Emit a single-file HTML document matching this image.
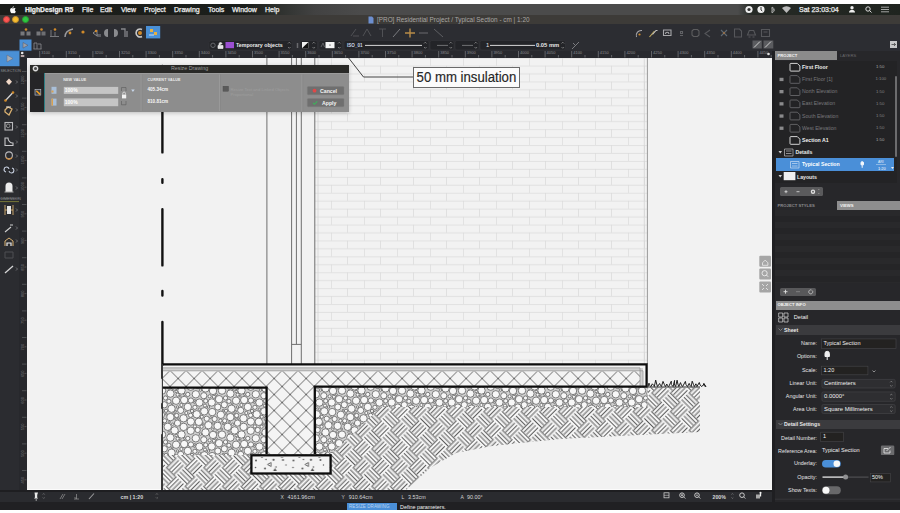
<!DOCTYPE html>
<html><head><meta charset="utf-8">
<style>
*{box-sizing:border-box}
html,body{margin:0;padding:0}
body{width:900px;height:513px;overflow:hidden;background:#fff;position:relative;font-family:"Liberation Sans",sans-serif;color:#ddd}
.a{position:absolute}
.t{position:absolute;white-space:nowrap}
#menubar{left:0;top:4px;width:900px;height:11px;background:linear-gradient(90deg,#1a1d1a 0,#1b1e1b 245px,#2c2f2c 275px,#424242 315px,#4b4b4b 360px,#4b4b4b 738px,#262a26 752px,#1f241f 900px)}
#menubar .t{top:1px;font-size:7px;line-height:9px;color:#f4f4f4;-webkit-text-stroke:.25px #e8e8e8}
#titlebar{left:0;top:15px;width:900px;height:9px;background:#3d3b38}
#toolbar{left:0;top:24px;width:900px;height:27px;background:#2c2d32}
#rtop{left:27px;top:51px;width:745px;height:7px;background:#28292e}
#ltools{left:0;top:51px;width:19px;height:439px;background:#2b2c30}
#rleft{left:19px;top:51px;width:8px;height:439px;background:#27282c}
#canvas{left:27px;top:58px;width:745px;height:432px;background:#f2f2f2;overflow:hidden}
#rpanel{left:772px;top:51px;width:128px;height:459px;background:#27272a}
#status{left:0;top:490px;width:772px;height:20px;background:#2a2b2f}
#bottomwhite{left:0;top:510px;width:900px;height:3px;background:#fff}
</style></head><body>
<!-- MENUBAR -->
<div id="menubar" class="a">
  <svg class="a" style="left:9px;top:1px" width="7" height="9" viewBox="0 0 7 9"><path d="M3.6 2.1c.3-.5.9-.9 1.3-.9 0 .5-.2 1-.5 1.3-.3.3-.7.5-1 .5 0-.3 0-.6.2-.9zM5.3 3.1c.6 0 1 .3 1.3.7-1.1.6-1 2.2.2 2.6-.3.9-.9 1.9-1.6 1.9-.5 0-.6-.3-1.2-.3s-.8.3-1.2.3C2 8.3 1.1 6.6 1.1 5.1c0-1.3.8-2 1.6-2 .5 0 .9.3 1.2.3.3 0 .8-.3 1.4-.3z" fill="#fafafa"/></svg>
  <span class="t" style="left:25px;font-weight:bold;font-size:6.8px">HighDesign R5</span>
  <span class="t" style="left:82px">File</span>
  <span class="t" style="left:100px">Edit</span>
  <span class="t" style="left:121px">View</span>
  <span class="t" style="left:144px">Project</span>
  <span class="t" style="left:174px">Drawing</span>
  <span class="t" style="left:208px">Tools</span>
  <span class="t" style="left:232px">Window</span>
  <span class="t" style="left:265px">Help</span>
  <svg class="a" style="left:741px;top:1px" width="160" height="9" viewBox="0 0 160 9">
    <circle cx="8" cy="4.5" r="3.6" fill="#eee"/><circle cx="8" cy="4.5" r="1.6" fill="#333"/>
    <circle cx="20" cy="4.5" r="3.6" fill="#eee"/><path d="M20 2v3l1.3 1" stroke="#333" stroke-width="1" fill="none"/>
    <path d="M31 2l2.5 2-2.5 2.5M31 2v6l2.5-2.2L31 3.3" stroke="#ccc" stroke-width=".7" fill="none"/>
    <path d="M41 3a7 7 0 0 1 9 0L45.5 8z" fill="#bbb"/>
    <path d="M108 7.5c0-2 1.5-2.5 3-2.5s3 .5 3 2.5zM111 1a1.7 1.7 0 1 1 0 3.4 1.7 1.7 0 0 1 0-3.4" fill="#eee"/>
    <circle cx="127" cy="4" r="2.2" stroke="#ddd" stroke-width="1" fill="none"/><path d="M128.5 5.5l2 2" stroke="#ddd" stroke-width="1"/>
    <path d="M140 2.2h8M140 4.5h8M140 6.8h8" stroke="#ddd" stroke-width=".7"/>
  </svg>
  <span class="t" style="left:799px">Sat 23:03:04</span>
</div>
<!-- TITLEBAR -->
<div id="titlebar" class="a">
  <div class="a" style="left:2.5px;top:1.2px;width:7px;height:7px;border-radius:50%;background:#fc5753;border:.5px solid #c8403c"></div>
  <div class="a" style="left:11.8px;top:1.2px;width:7px;height:7px;border-radius:50%;background:#f6bd30;border:.5px solid #c8942a"></div>
  <div class="a" style="left:21.5px;top:1.2px;width:7px;height:7px;border-radius:50%;background:#30c640;border:.5px solid #24a032"></div>
  <svg class="a" style="left:368px;top:1px" width="6" height="8"><path d="M.5 .5h3.5l1.5 1.5v5.5h-5z" fill="#6d8fd0"/></svg>
  <span class="t" style="left:377px;top:0;font-size:6.4px;line-height:9px;color:#a9a7a5">[PRO] Residential Project / Typical Section - cm | 1:20</span>
</div>
<div id="toolbar" class="a"></div>
<svg class="a" style="left:0;top:0" width="900" height="58" viewBox="0 0 900 58">
<!-- row1 left group -->
<g fill="none" stroke="#8a8b8f" stroke-width="1">
 <rect x="20.5" y="31.5" width="4" height="4" fill="#77787c" stroke="none"/><rect x="26.5" y="31.5" width="4" height="4" fill="#77787c" stroke="none"/>
 <rect x="36.5" y="31.5" width="4" height="4" fill="#77787c" stroke="none"/><rect x="41.5" y="31.5" width="4" height="4" fill="#6d6e72" stroke="none"/>
 <path d="M50 36.5h9M51 30v6M55 32v4" stroke="#77787c"/>
 <path d="M65 37c0-4 3-7 8-8" stroke="#9a9b9f" stroke-width="1.4"/>
 <path d="M93 33l4-3v6zM98 34v3M100 34v3" stroke="#8a8b8f"/>
 <path d="M108 29a4 4 0 0 0 0 8zM114 29a4 4 0 0 1 0 8z" fill="#8a8b8f" stroke="none"/>
 <path d="M121 29h4v8M127 31v6" stroke="#85868a" stroke-width="1.3"/>
 <path d="M142 29.5a4 4 0 1 0 0 7" stroke="#c8c8c8" stroke-width="1.6"/>
</g>
<g fill="#d08a2a">
 <circle cx="26" cy="29.5" r="1.3"/><circle cx="41.5" cy="29.5" r="1.3"/><circle cx="55" cy="29.5" r="1.3"/><circle cx="70" cy="33" r="1.4"/>
 <circle cx="83" cy="32" r="1.6"/><circle cx="96" cy="31" r="1.2"/><circle cx="140" cy="33" r="2"/>
</g>
<rect x="146" y="26" width="14.2" height="12.4" fill="#4a90d6"/>
<rect x="150" y="29" width="3" height="3" fill="#e8b040"/><rect x="154" y="32" width="3" height="3" fill="#e8b040"/><path d="M149 35h5" stroke="#cfe0f0" stroke-width="1"/>
<!-- row1 middle group -->
<g fill="none" stroke="#505155" stroke-width="1">
 <path d="M351 36l5-7M353 36h6"/><path d="M363 36l4-7 4 7"/><path d="M379 29h7M382.5 29v8"/>
 <path d="M393 37l7-8" stroke="#7a7b7f"/><path d="M419 33h9" stroke="#6a6b6f"/><path d="M434 29l9 8" stroke="#5e5f63"/>
</g>
<path d="M405 33h10M410 28.5v9" stroke="#b88c48" stroke-width="1.4"/>
<!-- row1 right group -->
<g fill="none" stroke-width="1.1">
 <path d="M636.5 37a5 5 0 0 1 5.5-6.5" stroke="#a8a8ac"/><circle cx="639.5" cy="34.5" r="1.1" fill="#d08a2a" stroke="none"/>
 <path d="M649.5 37l5-6" stroke="#c8b060"/><path d="M652.5 34.5l3.5-4h1.5" stroke="#c0c0c0"/>
 <path d="M663.5 30h7.5v5.5h-7.5zM665.5 34a1.7 1.7 0 0 1 3.4 0" stroke="#a8a8ab"/>
 <path d="M680.5 31.5h2v2h-2zM680 35.5h3" stroke="#606165"/>
 <path d="M693.5 29.5h4l1.5 1.5v4l-1.5 1.5h-4l-1.5-1.5v-4z" stroke="#5c5c5e"/>
 <path d="M710 30l-5 3.5 5 3.5" stroke="#55565a"/>
 <path d="M721 30l6 6M727 30l-6 6" stroke="#5f6a74"/><circle cx="724" cy="33" r="1" fill="#a07040" stroke="none"/>
 <path d="M734.5 29h5l2 2v6h-7z" stroke="#56575b"/>
 <path d="M747.5 35h8l-1.8-4.5h-4.4zM748.5 37h2M752.5 37h2" stroke="#56575b"/>
 <path d="M761.5 29.5h8v7h-8zM763.5 32h4" stroke="#56575b"/>
</g>
<!-- row2 -->
<rect x="19.5" y="39.5" width="12" height="11.2" fill="#4a90d6"/>
<path d="M23 42.5l5 2.8-5 2.8z" fill="#9aa0a8" stroke="#556" stroke-width=".5"/>
<path d="M33.5 49h8M34 49v-6h3v6M38 44h3v5" stroke="#8a8b8f" stroke-width=".8" fill="none"/>
<rect x="209" y="40.5" width="83" height="9.5" rx="2" fill="#232428" stroke="#35363a" stroke-width=".6"/>
<circle cx="213" cy="45.3" r="2.2" fill="none" stroke="#6a6b6f" stroke-width=".9"/>
<path d="M218 45.5h5v3h-5zM219 45.5v-1.5a1.5 1.5 0 0 1 3 0" fill="#e6e6e6" stroke="#e6e6e6" stroke-width=".7"/>
<rect x="225.5" y="42" width="8.5" height="6.2" fill="#9b4fd2"/>
<path d="M288 43.5l1.3-1.3 1.3 1.3M288 47l1.3 1.3 1.3-1.3" stroke="#aaa" stroke-width=".6" fill="none"/>
<path d="M297.5 43v5" stroke="#6a6b6f" stroke-width="1.5"/>
<rect x="300" y="40.5" width="17.5" height="9.5" rx="2" fill="#232428" stroke="#35363a" stroke-width=".6"/>
<path d="M302 42h6.5v6.2H302z" fill="#f0f0f0"/><path d="M302 48.2l6.5-6.2v6.2z" fill="#111"/>
<path d="M312.5 43.5l1.3-1.3 1.3 1.3M312.5 47l1.3 1.3 1.3-1.3" stroke="#aaa" stroke-width=".6" fill="none"/>
<rect x="319" y="40.5" width="23" height="9.5" rx="2" fill="#232428" stroke="#35363a" stroke-width=".6"/>
<path d="M321 47l2-4 1.5 4" stroke="#6a6b6f" stroke-width=".8" fill="none"/>
<rect x="325.5" y="42" width="9" height="6.2" fill="#f4f4f4"/><circle cx="330" cy="45.1" r=".9" fill="#999"/>
<path d="M338 43.5l1.3-1.3 1.3 1.3M338 47l1.3 1.3 1.3-1.3" stroke="#aaa" stroke-width=".6" fill="none"/>
<rect x="344" y="40.5" width="85" height="9.5" rx="2" fill="#232428" stroke="#35363a" stroke-width=".6"/>
<path d="M365 45.4h57" stroke="#d6d6d6" stroke-width="1"/>
<path d="M424 43.5l1.3-1.3 1.3 1.3M424 47l1.3 1.3 1.3-1.3" stroke="#aaa" stroke-width=".6" fill="none"/>
<rect x="430" y="40.5" width="24" height="9.5" rx="2" fill="#232428" stroke="#35363a" stroke-width=".6"/>
<path d="M437 45.4h11" stroke="#6f7073" stroke-width="1"/>
<path d="M449.5 43.5l1.3-1.3 1.3 1.3M449.5 47l1.3 1.3 1.3-1.3" stroke="#aaa" stroke-width=".6" fill="none"/>
<rect x="455" y="40.5" width="24" height="9.5" rx="2" fill="#232428" stroke="#35363a" stroke-width=".6"/>
<path d="M462 45.4h11" stroke="#6f7073" stroke-width="1"/>
<path d="M474.5 43.5l1.3-1.3 1.3 1.3M474.5 47l1.3 1.3 1.3-1.3" stroke="#aaa" stroke-width=".6" fill="none"/>
<rect x="480" y="40.5" width="85.5" height="9.5" rx="2" fill="#232428" stroke="#35363a" stroke-width=".6"/>
<path d="M490 45.4h45" stroke="#d6d6d6" stroke-width="1"/>
<path d="M561.5 43.5l1.3-1.3 1.3 1.3M561.5 47l1.3 1.3 1.3-1.3" stroke="#aaa" stroke-width=".6" fill="none"/>
<path d="M572 49l7-7M573 43l3 3" stroke="#7a7b7f" stroke-width="1" fill="none"/>
<rect x="752.5" y="40.5" width="9.3" height="8" fill="#5a5b5f"/><path d="M754 47.5l6-6" stroke="#cfcfcf" stroke-width="1"/>
<rect x="763.5" y="40.5" width="9.8" height="8" fill="#5a5b5f"/><path d="M765 47.5l6-6" stroke="#cfcfcf" stroke-width="1"/>
</svg>
<span class="t" style="left:236px;top:42px;font-size:5.25px;line-height:7px;color:#ececec;font-weight:bold">Temporary objects</span>
<span class="t" style="left:347px;top:42px;font-size:4.6px;line-height:7px;color:#c8d4e6;font-weight:bold">ISO_01</span>
<span class="t" style="left:486px;top:42px;font-size:5.8px;line-height:7px;color:#e6e6e6">1</span>
<span class="t" style="left:536px;top:42px;font-size:5.8px;line-height:7px;color:#e6e6e6;font-weight:bold">0.05 mm</span>
<div id="rtop" class="a"></div>
<div id="ltools" class="a"></div><div id="rleft" class="a"></div>
<svg class="a" style="left:0;top:0" width="900" height="513" viewBox="0 0 900 513">
<path d="M39.7 51V57.5M53.0 55V57.5M66.3 51V57.5M79.6 55V57.5M92.9 51V57.5M106.2 55V57.5M119.5 51V57.5M132.8 55V57.5M146.1 51V57.5M159.4 55V57.5M172.7 51V57.5M186.0 55V57.5M199.3 51V57.5M212.6 55V57.5M225.9 51V57.5M239.2 55V57.5M252.5 51V57.5M265.8 55V57.5M279.1 51V57.5M292.4 55V57.5M305.7 51V57.5M319.0 55V57.5M332.3 51V57.5M345.6 55V57.5M358.9 51V57.5M372.2 55V57.5M385.5 51V57.5M398.8 55V57.5M412.1 51V57.5M425.4 55V57.5M438.7 51V57.5M452.0 55V57.5M465.3 51V57.5M478.6 55V57.5M491.9 51V57.5M505.2 55V57.5M518.5 51V57.5M531.8 55V57.5M545.1 51V57.5M558.4 55V57.5M571.7 51V57.5M585.0 55V57.5M598.3 51V57.5M611.6 55V57.5M624.9 51V57.5M638.2 55V57.5M651.5 51V57.5M664.8 55V57.5M678.1 51V57.5M691.4 55V57.5M704.7 51V57.5M718.0 55V57.5M731.3 51V57.5M744.6 55V57.5M757.9 51V57.5M771.2 55V57.5" stroke="#8a8b8f" stroke-width=".6"/>
<g font-family="Liberation Sans" font-size="4" fill="#8c8d91"><text x="41.2" y="54.4">3100</text><text x="67.8" y="54.4">3150</text><text x="94.4" y="54.4">3200</text><text x="121.0" y="54.4">3250</text><text x="147.6" y="54.4">3300</text><text x="174.2" y="54.4">3350</text><text x="200.8" y="54.4">3400</text><text x="227.4" y="54.4">3450</text><text x="254.0" y="54.4">3500</text><text x="280.6" y="54.4">3550</text><text x="307.2" y="54.4">3600</text><text x="333.8" y="54.4">3650</text><text x="360.4" y="54.4">3700</text><text x="387.0" y="54.4">3750</text><text x="413.6" y="54.4">3800</text><text x="440.2" y="54.4">3850</text><text x="466.8" y="54.4">3900</text><text x="493.4" y="54.4">3950</text><text x="520.0" y="54.4">4000</text><text x="546.6" y="54.4">4050</text><text x="573.2" y="54.4">4100</text><text x="599.8" y="54.4">4150</text><text x="626.4" y="54.4">4200</text><text x="653.0" y="54.4">4250</text><text x="679.6" y="54.4">4300</text><text x="706.2" y="54.4">4350</text><text x="732.8" y="54.4">4400</text><text x="759.4" y="54.4">4450</text></g>
<circle cx="768.5" cy="54" r="1.3" fill="#e0e0e0"/>
<path d="M24.5 80.8H26.5M22 71.5H26.5M24.5 107.4H26.5M22 98.1H26.5M24.5 134.0H26.5M22 124.7H26.5M24.5 160.6H26.5M22 151.3H26.5M24.5 187.2H26.5M22 177.9H26.5M24.5 213.8H26.5M22 204.5H26.5M24.5 240.4H26.5M22 231.1H26.5M24.5 267.0H26.5M22 257.7H26.5M24.5 293.6H26.5M22 284.3H26.5M24.5 320.2H26.5M22 310.9H26.5M24.5 346.8H26.5M22 337.5H26.5M24.5 373.4H26.5M22 364.1H26.5M24.5 400.0H26.5M22 390.7H26.5M24.5 426.6H26.5M22 417.3H26.5M24.5 453.2H26.5M22 443.9H26.5M24.5 479.8H26.5M22 470.5H26.5" stroke="#6a6b6f" stroke-width=".6"/><g font-family="Liberation Sans" font-size="4" fill="#77787c"><text transform="translate(23.8 84.5) rotate(-90)">1200</text><text transform="translate(23.8 111.1) rotate(-90)">1150</text><text transform="translate(23.8 137.7) rotate(-90)">1100</text><text transform="translate(23.8 164.3) rotate(-90)">1050</text><text transform="translate(23.8 190.9) rotate(-90)">1000</text><text transform="translate(23.8 217.5) rotate(-90)">950</text><text transform="translate(23.8 244.1) rotate(-90)">900</text><text transform="translate(23.8 270.7) rotate(-90)">850</text><text transform="translate(23.8 297.3) rotate(-90)">800</text><text transform="translate(23.8 323.9) rotate(-90)">750</text><text transform="translate(23.8 350.5) rotate(-90)">700</text><text transform="translate(23.8 377.1) rotate(-90)">650</text><text transform="translate(23.8 403.7) rotate(-90)">600</text><text transform="translate(23.8 430.3) rotate(-90)">550</text><text transform="translate(23.8 456.9) rotate(-90)">500</text><text transform="translate(23.8 483.5) rotate(-90)">450</text></g>
<rect x="19.5" y="51" width="7.5" height="7" fill="#2b2c30"/><circle cx="22.2" cy="53" r="1.3" fill="#e8e8e8"/><rect x="20.8" y="55" width="3.5" height="2" fill="#b8a8a8"/><rect x="0" y="51" width="19.5" height="15.2" fill="#4a90d6"/>
<path d="M7 55l6 3.5-6 3.5z" fill="#a8aeb6" stroke="#667" stroke-width=".5"/>
<rect x="0" y="50.5" width="19.5" height=".8" fill="#3b6fa8"/>
<text x="0.5" y="71.5" font-family="Liberation Sans" font-size="3.6" fill="#8e8f93">SELECTION</text>

<path d="M9 78.5l3 3.3-3 3.3-3-3.3z" fill="#f0d8c8"/>
<path d="M5.5 100.5L13 92.5" stroke="#d8d8d8" stroke-width="1.2"/><circle cx="5.5" cy="100.5" r="1.3" fill="#d08a2a"/><circle cx="13" cy="92.5" r="1.3" fill="#d08a2a"/>
<path d="M5 110l3-3 4 2-3 6-4-3z" stroke="#d9b070" stroke-width="1.3" fill="none"/><path d="M6 107l5 0" stroke="#ddd" stroke-width="1"/>
<rect x="5" y="122.5" width="7.5" height="7.5" stroke="#b8b8bb" stroke-width="1.1" fill="none"/><circle cx="8.2" cy="125.8" r="1.8" stroke="#999" stroke-width=".9" fill="none"/>
<path d="M5 145.5v-7.5l3 0a5 5 0 0 0 5 5v2.5z" stroke="#c8c8cb" stroke-width="1.1" fill="none"/>
<circle cx="9" cy="155.3" r="3.4" stroke="#b8b8bb" stroke-width="1.1" fill="none"/><path d="M6 157.5a3.4 3.4 0 0 0 6 0" stroke="#d08a3a" stroke-width="1.3" fill="none"/>
<path d="M6 172a2.5 2.5 0 1 1 3-3M12 168a2.5 2.5 0 1 1-3 3" stroke="#c8d0e0" stroke-width="1.1" fill="none"/>
<path d="M5.5 192v-6a3.5 3.5 0 0 1 7 0v6z" fill="#ececec"/><path d="M4.5 192h9" stroke="#aaa" stroke-width="1"/>
<path d="M5 205v10M13 205v10M5 210h8M8 206v8M10 206v8" stroke="#d9b070" stroke-width=".9" fill="none"/><path d="M7 206h4v8h-4z" fill="#e8e8e8"/>
<path d="M5 232l6-5M10 225l3 0" stroke="#d0d0d0" stroke-width="1.1" fill="none"/>
<path d="M5 246v-5l4-3 4 3v5" stroke="#d8b070" stroke-width="1" fill="none"/><path d="M7 246v-3h4v3" stroke="#eee" stroke-width="1.2" fill="none"/>
<path d="M5 252h8v6h-8z" stroke="#4e4f53" stroke-width="1" fill="none"/>
<path d="M5 273l8-7" stroke="#d6d6d6" stroke-width="1.3"/>

<g stroke="#8a8b8f" stroke-width=".7" fill="none">
<path d="M16 80.5l1.5 1.5-1.5 1.5"/>
<path d="M16 94.5l1.5 1.5-1.5 1.5"/>
<path d="M16 108.5l1.5 1.5-1.5 1.5"/>
<path d="M16 125.5l1.5 1.5-1.5 1.5"/>
<path d="M16 140.5l1.5 1.5-1.5 1.5"/>
<path d="M16 154.5l1.5 1.5-1.5 1.5"/>
<path d="M16 168.5l1.5 1.5-1.5 1.5"/>
<path d="M16 186.5l1.5 1.5-1.5 1.5"/>
<path d="M16 208.5l1.5 1.5-1.5 1.5"/>
<path d="M16 226.5l1.5 1.5-1.5 1.5"/>
<path d="M16 239.5l1.5 1.5-1.5 1.5"/>
<path d="M16 267.5l1.5 1.5-1.5 1.5"/>
</g>
<path d="M0 198.5H19" stroke="#46474b" stroke-width="1"/><text x="0.5" y="199.5" font-family="Liberation Sans" font-size="3.6" fill="#8e8f93">DIMENSION</text>
<path d="M0 201.6H19" stroke="#8a8a3a" stroke-width=".8"/>
</svg><div id="canvas" class="a"></div>
<svg class="a" style="left:0;top:0" width="900" height="513" viewBox="0 0 900 513">
<defs>
<clipPath id="cv"><rect x="27" y="58" width="745" height="432"/></clipPath>
<pattern id="brick" patternUnits="userSpaceOnUse" x="1" y="1.95" width="33" height="15.9"><path d="M0 .4H33M0 8.35H33M16.5 0V7.95M.4 7.95V15.9" stroke="#d9d9d9" stroke-width=".75" fill="none"/></pattern>
<pattern id="xh" patternUnits="userSpaceOnUse" x="2.1" y="10.5" width="16" height="16"><rect width="16" height="16" fill="#f4f4f4"/><path d="M0 0L16 16M16 0L0 16M-1 15L1 17M15 -1L17 1" stroke="#5a5a5a" stroke-width=".9" fill="none"/></pattern>
<pattern id="bw" patternUnits="userSpaceOnUse" width="26.40" height="26.40" patternTransform="translate(-1.5 0) rotate(45)"><rect width="26.40" height="26.40" fill="#f6f6f6"/><path d="M0.00 0.82H13.20M0.00 4.12H13.20M0.00 7.42H13.20M0.00 10.72H13.20M0.82 13.20V26.40M4.12 13.20V26.40M7.42 13.20V26.40M10.72 13.20V26.40M14.02 0.00V13.20M17.32 0.00V13.20M20.62 0.00V13.20M23.92 0.00V13.20M13.20 14.02H26.40M13.20 17.32H26.40M13.20 20.62H26.40M13.20 23.92H26.40" stroke="#383838" stroke-width=".85" fill="none"/></pattern>
<pattern id="gr" patternUnits="userSpaceOnUse" width="60" height="44"><rect width="60" height="44" fill="#d0d0d0"/><g fill="#f7f7f7" stroke="#5e5e5e" stroke-width=".8"><circle cx="19.4" cy="6.6" r="3.7"/><circle cx="39.1" cy="3.2" r="3.7"/><circle cx="39.1" cy="47.2" r="3.7"/><circle cx="32.2" cy="16.1" r="3.7"/><circle cx="3.5" cy="22.3" r="3.7"/><circle cx="63.5" cy="22.3" r="3.7"/><circle cx="4.2" cy="4.0" r="3.7"/><circle cx="4.2" cy="48.0" r="3.7"/><circle cx="64.2" cy="4.0" r="3.7"/><circle cx="64.2" cy="48.0" r="3.7"/><circle cx="25.5" cy="36.4" r="3.7"/><circle cx="51.5" cy="12.7" r="3.7"/><circle cx="10.8" cy="25.6" r="3.7"/><circle cx="40.8" cy="18.8" r="3.7"/><circle cx="18.8" cy="25.8" r="3.7"/><circle cx="47.7" cy="30.8" r="3.7"/><circle cx="50.4" cy="-2.4" r="3.7"/><circle cx="50.4" cy="41.6" r="3.7"/><circle cx="28.4" cy="29.2" r="3.7"/><circle cx="3.6" cy="30.9" r="3.7"/><circle cx="63.6" cy="30.9" r="3.7"/><circle cx="7.8" cy="10.9" r="3.7"/><circle cx="33.0" cy="38.9" r="3.7"/><circle cx="16.7" cy="18.3" r="3.7"/><circle cx="1.5" cy="38.5" r="3.7"/><circle cx="61.5" cy="38.5" r="3.7"/><circle cx="31.7" cy="6.5" r="3.7"/><circle cx="50.4" cy="21.1" r="3.7"/><circle cx="54.6" cy="34.4" r="3.7"/><circle cx="10.7" cy="34.7" r="3.7"/><circle cx="42.0" cy="38.6" r="3.7"/><circle cx="-3.9" cy="4.7" r="3.7"/><circle cx="-3.9" cy="48.7" r="3.7"/><circle cx="56.1" cy="4.7" r="3.7"/><circle cx="56.1" cy="48.7" r="3.7"/><circle cx="24.3" cy="15.3" r="3.7"/><circle cx="15.8" cy="-1.7" r="3.7"/><circle cx="15.8" cy="42.3" r="3.7"/><circle cx="37.6" cy="29.9" r="3.7"/><circle cx="-2.5" cy="27.1" r="3.1"/><circle cx="57.5" cy="27.1" r="3.1"/><circle cx="44.3" cy="8.8" r="3.1"/><circle cx="23.8" cy="-0.3" r="3.1"/><circle cx="23.8" cy="43.7" r="3.1"/><circle cx="0.7" cy="14.4" r="3.1"/><circle cx="60.7" cy="14.4" r="3.1"/><circle cx="37.8" cy="11.0" r="3.1"/><circle cx="26.7" cy="22.7" r="2.6"/><circle cx="10.9" cy="4.5" r="2.6"/><circle cx="34.6" cy="23.0" r="2.6"/><circle cx="17.7" cy="34.0" r="2.6"/><circle cx="25.7" cy="4.9" r="2.1"/><circle cx="10.6" cy="19.3" r="2.1"/><circle cx="14.9" cy="11.3" r="2.1"/><circle cx="7.8" cy="-1.6" r="2.1"/><circle cx="7.8" cy="42.4" r="2.1"/><circle cx="44.7" cy="24.8" r="2.1"/><circle cx="56.6" cy="19.5" r="2.1"/><circle cx="48.9" cy="5.3" r="2.1"/><circle cx="45.5" cy="2.0" r="2.1"/><circle cx="45.5" cy="46.0" r="2.1"/><circle cx="21.6" cy="30.7" r="1.6"/><circle cx="40.4" cy="24.7" r="1.6"/><circle cx="14.9" cy="30.4" r="1.6"/><circle cx="46.0" cy="14.8" r="1.6"/><circle cx="29.6" cy="0.3" r="1.6"/><circle cx="29.6" cy="44.3" r="1.6"/><circle cx="-2.4" cy="-1.3" r="1.6"/><circle cx="-2.4" cy="42.7" r="1.6"/><circle cx="57.6" cy="-1.3" r="1.6"/><circle cx="57.6" cy="42.7" r="1.6"/><circle cx="21.8" cy="20.8" r="1.6"/><circle cx="33.9" cy="0.8" r="1.6"/><circle cx="33.9" cy="44.8" r="1.6"/><circle cx="12.0" cy="15.0" r="1.6"/><circle cx="1.4" cy="9.0" r="1.6"/><circle cx="61.4" cy="9.0" r="1.6"/><circle cx="25.0" cy="9.6" r="1.6"/><circle cx="6.3" cy="17.0" r="1.6"/><circle cx="19.3" cy="13.2" r="1.2"/><circle cx="57.4" cy="11.0" r="1.2"/><circle cx="28.5" cy="11.0" r="1.2"/><circle cx="49.0" cy="36.2" r="1.2"/><circle cx="56.2" cy="39.5" r="1.2"/><circle cx="52.7" cy="28.2" r="1.2"/><circle cx="32.8" cy="33.2" r="1.2"/><circle cx="20.4" cy="38.1" r="1.2"/><circle cx="37.2" cy="35.8" r="1.2"/><circle cx="33.2" cy="27.0" r="1.2"/><circle cx="52.1" cy="7.8" r="0.9"/><circle cx="46.3" cy="18.2" r="0.9"/><circle cx="4.4" cy="-1.4" r="0.9"/><circle cx="4.4" cy="42.6" r="0.9"/><circle cx="49.5" cy="26.0" r="0.9"/><circle cx="43.2" cy="14.2" r="0.9"/><circle cx="55.2" cy="22.6" r="0.9"/><circle cx="30.7" cy="21.6" r="0.9"/><circle cx="53.8" cy="17.5" r="0.9"/><circle cx="41.7" cy="33.0" r="0.9"/><circle cx="14.8" cy="4.4" r="0.9"/><circle cx="14.3" cy="6.5" r="0.9"/><circle cx="55.7" cy="15.3" r="0.9"/><circle cx="23.3" cy="27.9" r="0.9"/><circle cx="0.2" cy="0.1" r="0.9"/><circle cx="0.2" cy="44.1" r="0.9"/><circle cx="60.2" cy="0.1" r="0.9"/><circle cx="60.2" cy="44.1" r="0.9"/><circle cx="36.5" cy="-1.4" r="0.9"/><circle cx="36.5" cy="42.6" r="0.9"/><circle cx="-1.8" cy="22.6" r="0.9"/><circle cx="58.2" cy="22.6" r="0.9"/><circle cx="43.2" cy="27.8" r="0.9"/></g></pattern>
<pattern id="cc" patternUnits="userSpaceOnUse" x="253" y="456" width="37.5" height="18"><rect width="37.5" height="18" fill="#f3f3f3"/><g fill="#5e5e5e"><circle cx="3" cy="4.5" r="1"/><circle cx="13" cy="3.5" r=".8"/><circle cx="20.5" cy="3.8" r="1.1"/><circle cx="30" cy="4" r="1"/><circle cx="2.5" cy="11.5" r=".8"/><circle cx="12" cy="12.5" r="1"/><circle cx="23" cy="11" r=".8"/><circle cx="33" cy="9" r=".7"/></g><path d="M18 6.5l-3.5 2 3.5 2z" stroke="#444" stroke-width=".8" fill="none"/><path d="M22 12l1.8 3h-3.6z" fill="#555"/><path d="M8 1.5h2M28 1.5h2" stroke="#777" stroke-width=".8"/></pattern>
</defs>
<g clip-path="url(#cv)">
<rect x="315" y="50" width="332.5" height="314" fill="url(#brick)"/>
<path d="M647.4 50V364" stroke="#9a9a9a" stroke-width="1"/><path d="M318 50V364M644.3 50V364" stroke="#d4d4d4" stroke-width=".8"/>
<g stroke="#6e6e6e" stroke-width="1" fill="none"><path d="M266.9 50V364M291.6 50V364M301.3 50V364M314.8 50V364M296.4 50V344.4M291.6 344.4H301.3"/></g>
<path d="M162.4 -17V39M162.4 66V70M162.4 96.2V152.4M162.4 179.2V182.8M162.4 209.2V265.4M162.4 291V295.6M162.4 322V378M162.4 404V408M162.4 435V492" stroke="#111" stroke-width="2.4" stroke-linecap="round"/>
<path d="M162.4 405V490H406L430 468L456 453L492 446L560 439L700 432V387.5H647.7V406H381L332.8 452.5H162.4z" fill="url(#bw)"/>
<rect x="162.4" y="387" width="104.5" height="68" fill="url(#gr)"/>
<path d="M314.8 387H647.7V407H381L332.8 453H314.8z" fill="url(#gr)"/>
<path d="M162.4 371H641.5V387H314.8V454.5H266.9V387H162.4z" fill="url(#xh)"/>
<rect x="162.4" y="365.5" width="483.5" height="5.8" fill="#f4f4f4"/>
<path d="M162.4 369.3H641.5V386" stroke="#d0d0d0" stroke-width="2.8" fill="none"/><path d="M162.4 367.8H640V386M162.4 370.8H643V386" stroke="#8c8c8c" stroke-width=".7" fill="none"/>
<g stroke="#0d0d0d" stroke-width="2.3" fill="none" stroke-linejoin="miter"><path d="M162.4 364.3H646.6V386.6H314.8V454"/><path d="M162.4 387.6H266.6V454"/><rect x="251.4" y="455.3" width="79.2" height="18.2" fill="url(#cc)"/></g>
<path d="M162.4 364V490" stroke="#333" stroke-width="1.1"/>
<path d="M648 386.8 L649.0 383.1 L649.4 385.2 L651.0 386.6 L652.3 383.8 L653.8 385.5 L654.3 386.6 L655.7 380.1 L656.7 384.0 L657.5 386.6 L659.6 383.5 L660.5 385.4 L661.4 386.6 L663.0 381.4 L664.4 384.5 L665.4 386.6 L666.9 384.0 L667.2 385.6 L668.7 386.6 L671.3 381.2 L671.3 384.5 L673.1 386.6 L674.6 380.4 L674.3 384.1 L675.6 386.6 L677.1 380.2 L677.9 384.1 L678.8 386.6 L680.5 382.6 L681.4 385.0 L682.6 386.6 L685.4 381.4 L686.0 384.5 L687.5 386.6 L689.2 383.4 L690.0 385.3 L691.2 386.6 L692.2 381.2 L693.5 384.5 L694.4 386.6 L695.9 383.8 L696.7 385.5 L696.9 386.6 L699.3 382.5 L700.0 384.9 L701.8 386.6 L704.0 383.9 L703.9 385.5 L706.0 386.6 L703.5 383" stroke="#151515" stroke-width=".95" fill="none"/>
<path d="M647.7 387H700" stroke="#333" stroke-width="1"/>
<path d="M344 52L363.5 77H413.5" stroke="#444" stroke-width="1" fill="none"/>
<rect x="413.5" y="67.5" width="106" height="20" fill="#fbfbfb" stroke="#6a6a6a" stroke-width="1"/>
<text transform="translate(416.6 82.2) scale(1 1.08)" font-family="Liberation Sans" font-size="13.2" fill="#262626" stroke="#262626" stroke-width=".15">50 mm insulation</text>
</g>
</svg><svg class="a" style="left:0;top:0" width="900" height="513" viewBox="0 0 900 513">
 <rect x="759.3" y="255.8" width="11.7" height="11" rx="1" fill="#a6a6a6"/>
 <rect x="759.3" y="268.5" width="11.7" height="11" rx="1" fill="#a6a6a6"/>
 <rect x="759.3" y="281.4" width="11.7" height="11.2" rx="1" fill="#a6a6a6"/>
 <path d="M762.5 262.8l2.7-2.7 2.7 2.7v2.5h-5.4z" fill="none" stroke="#eee" stroke-width=".8"/>
 <circle cx="764.6" cy="273.2" r="2.6" fill="none" stroke="#eee" stroke-width=".9"/><path d="M766.4 275l1.8 1.8" stroke="#eee" stroke-width=".9"/>
 <path d="M762 284l2 2M768 284l-2 2M762 290l2-2M768 290l-2-2" stroke="#eee" stroke-width=".8"/>
</svg>
<div class="a" style="left:30.4px;top:64.6px;width:319px;height:47.2px;background:#8d8d8d;box-shadow:0 1px 4px rgba(0,0,0,.22)"></div>
<div class="a" style="left:30.4px;top:64.6px;width:319px;height:8px;background:#292927"></div>
<div class="a" style="left:30.4px;top:72.6px;width:13.8px;height:39.2px;background:#252527"></div>
<div class="a" style="left:44.2px;top:72.6px;width:.9px;height:39.2px;background:#2e7f84"></div>
<div class="a" style="left:45.1px;top:72.6px;width:304.3px;height:1.8px;background:#9b9b9b"></div>
<svg class="a" style="left:0;top:0" width="360" height="120" viewBox="0 0 360 120">
 <circle cx="35.5" cy="68.6" r="2.8" fill="#dcdcdc"/><circle cx="35.5" cy="68.6" r="1.5" fill="#4a4a4a"/>
 <rect x="35" y="89.3" width="5.8" height="5.8" fill="#3a3f4a" stroke="#c8ccd4" stroke-width=".6"/><path d="M36.3 90.8l3.8 3.6" stroke="#f0a020" stroke-width="1.5"/>
 <path d="M141.2 74.5V111M219.5 74.5V111M302 74.5V111" stroke="#a3a3a3" stroke-width=".7"/>
 <path d="M142 74.5V111M220.3 74.5V111M302.8 74.5V111" stroke="#808080" stroke-width=".5"/>
 <rect x="63.8" y="86.9" width="54.4" height="7" fill="#c5c5c5"/>
 <rect x="63.8" y="98.4" width="54.4" height="7.8" fill="#c5c5c5"/>
 <rect x="51.5" y="86.8" width="5" height="7" fill="#a9bfd8"/><rect x="51.5" y="90.5" width="2" height="2" fill="#d8a050"/>
 <rect x="51.5" y="98.6" width="5" height="7" fill="#a9bfd8"/><rect x="51.5" y="98.6" width="1.5" height="7" fill="#d8a050"/>
 <path d="M121.5 91V87.5h4.5V91M121.5 101v3.8h4.5V101" stroke="#5a5a5a" stroke-width=".6" fill="none"/>
 <rect x="122" y="94.6" width="4.2" height="3.8" fill="#f2f2f2"/><path d="M122.8 94.6v-1.3a1.3 1.3 0 0 1 2.6 0v1.3" stroke="#f2f2f2" stroke-width=".7" fill="none"/>
 <path d="M131.2 89.6h3.5l-1.75 2.3z" fill="#c8d8ec"/>
 <rect x="223" y="86.2" width="5.5" height="5" fill="#5a5a5a" stroke="#4a4a4a" stroke-width=".4"/>
 <rect x="307.3" y="86.6" width="36.7" height="8.2" rx="1" fill="#6f6f6f" stroke="#7d7d7d" stroke-width=".4"/>
 <rect x="307.3" y="98.5" width="36.7" height="8.3" rx="1" fill="#6f6f6f" stroke="#7d7d7d" stroke-width=".4"/>
 <circle cx="314.5" cy="90.7" r="1.9" fill="#e04848"/>
 <path d="M313 102.8l1.5 1.5 2.8-3" stroke="#3cb45a" stroke-width="1.1" fill="none"/>
</svg>
<span class="t" style="left:171px;top:65px;font-size:5.3px;line-height:7px;color:#9c9c9c">Resize Drawing</span>
<span class="t" style="left:63.2px;top:78px;font-size:3.7px;line-height:5px;color:#ececec;font-weight:bold;letter-spacing:.15px">NEW VALUE</span>
<span class="t" style="left:147.5px;top:77.6px;font-size:3.7px;line-height:5px;color:#ececec;font-weight:bold;letter-spacing:.15px">CURRENT VALUE</span>
<span class="t" style="left:64.8px;top:87.3px;font-size:5px;line-height:6px;color:#fcfcfc;font-weight:bold">100%</span>
<span class="t" style="left:64.8px;top:99.3px;font-size:5px;line-height:6px;color:#fcfcfc;font-weight:bold">100%</span>
<span class="t" style="left:147.5px;top:87.3px;font-size:4.6px;line-height:6px;color:#f6f6f6;font-weight:bold">405.34cm</span>
<span class="t" style="left:147.5px;top:98.8px;font-size:4.6px;line-height:6px;color:#f6f6f6;font-weight:bold">810.81cm</span>
<span class="t" style="left:230.5px;top:86.5px;font-size:4.2px;line-height:5.5px;color:#9e9e9e">Resize Text and Linked Objects<br>Proportional</span>
<span class="t" style="left:320px;top:87.6px;font-size:5.2px;line-height:6px;color:#f4f4f4;font-weight:bold">Cancel</span>
<span class="t" style="left:322px;top:99.6px;font-size:5.2px;line-height:6px;color:#f4f4f4;font-weight:bold">Apply</span>
<div id="rpanel" class="a"></div>
<div class="a" style="left:772px;top:51px;width:3px;height:459px;background:#1f1f22"></div>
<div class="a" style="left:775px;top:60.5px;width:122px;height:122.5px;background:#232325"></div>
<div class="a" style="left:775px;top:210.3px;width:125px;height:73px;background:repeating-linear-gradient(180deg,#29292b 0,#29292b 6px,#252527 6px,#252527 12px)"></div>
<div class="a" style="left:775px;top:51.2px;width:61.7px;height:9.1px;background:#8b8b8b"></div>
<div class="a" style="left:836.7px;top:201.2px;width:63.3px;height:9.1px;background:#8e8e8e"></div>
<div class="a" style="left:775.9px;top:300.7px;width:124.1px;height:8.9px;background:#8e8e8e"></div>
<div class="a" style="left:775.9px;top:324.9px;width:124.1px;height:10.1px;background:#3b3b3e"></div>
<div class="a" style="left:775.9px;top:419.8px;width:124.1px;height:9.6px;background:#3b3b3e"></div>
<div class="a" style="left:775.9px;top:158.2px;width:117.7px;height:12.5px;background:#4a8fd8"></div>
<div class="a" style="left:779.8px;top:187px;width:42.9px;height:9.4px;background:#5a5a5c;border-radius:1.5px"></div>
<div class="a" style="left:779.8px;top:287.5px;width:35.9px;height:8.5px;background:#58585a;border-radius:1.5px"></div>
<div class="a" style="left:895.2px;top:76px;width:2.3px;height:81.4px;background:#6c6c6e;border-radius:1px"></div>
<svg class="a" style="left:0;top:0" width="900" height="513" viewBox="0 0 900 513">
 <path d="M890 41h7v7h-7z" fill="#c8c8c8"/><path d="M891.5 44.5h4M894 43l1.5 1.5L894 46" stroke="#333" stroke-width=".7" fill="none"/>
 <g fill="none" stroke-width=".9"><path d="M790.8 63.4h6.5l2.6 2.6v4.3a.8 .8 0 0 1-.8 .8h-8.3a.8 .8 0 0 1-.8-.8v-6.1a.8 .8 0 0 1 .8-.8z" stroke="#e6e6e6"/><path d="M790.8 75.6h6.5l2.6 2.6v4.3a.8 .8 0 0 1-.8 .8h-8.3a.8 .8 0 0 1-.8-.8v-6.1a.8 .8 0 0 1 .8-.8z" stroke="#66666a"/><path d="M790.8 87.8h6.5l2.6 2.6v4.3a.8 .8 0 0 1-.8 .8h-8.3a.8 .8 0 0 1-.8-.8v-6.1a.8 .8 0 0 1 .8-.8z" stroke="#66666a"/><path d="M790.8 100.0h6.5l2.6 2.6v4.3a.8 .8 0 0 1-.8 .8h-8.3a.8 .8 0 0 1-.8-.8v-6.1a.8 .8 0 0 1 .8-.8z" stroke="#66666a"/><path d="M790.8 112.2h6.5l2.6 2.6v4.3a.8 .8 0 0 1-.8 .8h-8.3a.8 .8 0 0 1-.8-.8v-6.1a.8 .8 0 0 1 .8-.8z" stroke="#66666a"/><path d="M790.8 124.4h6.5l2.6 2.6v4.3a.8 .8 0 0 1-.8 .8h-8.3a.8 .8 0 0 1-.8-.8v-6.1a.8 .8 0 0 1 .8-.8z" stroke="#66666a"/><path d="M790.8 136.6h6.5l2.6 2.6v4.3a.8 .8 0 0 1-.8 .8h-8.3a.8 .8 0 0 1-.8-.8v-6.1a.8 .8 0 0 1 .8-.8z" stroke="#e6e6e6"/></g>
 <g fill="#8a8a8c">
  <rect x="779.5" y="77.8" width="4" height="3.3"/><rect x="779.5" y="90" width="4" height="3.3"/><rect x="779.5" y="102.2" width="4" height="3.3"/><rect x="779.5" y="114.4" width="4" height="3.3"/><rect x="779.5" y="126.6" width="4" height="3.3"/>
 </g>
 <path d="M778.5 151h3.5l-1.75 2.6z" fill="#d0d0d0"/>
 <path d="M784.5 149h8.5v7h-8.5zM786 151h5.5M786 153.5h5.5" stroke="#bdbdbf" stroke-width=".7" fill="none"/>
 <path d="M790.5 161.5h8.5v6.5h-8.5zM792 163.5h5.5M792 166h5.5" stroke="#c8dcf4" stroke-width=".7" fill="none"/>
 <path d="M861 162.3a1.5 1.5 0 0 1 2.5 0v2.5h-2.5zM862.2 164.8v3" stroke="#f4f8fc" stroke-width="1" fill="#f4f8fc"/>
 <path d="M876 164.5h10" stroke="#cfe0f4" stroke-width=".5"/>
 <path d="M891 167h3l-1.5 2z" fill="#f0f0f0"/>
 <path d="M778.5 175h3.5l-1.75 2.6z" fill="#d0d0d0"/>
 <rect x="783.7" y="172" width="11.7" height="8.2" fill="#f0f0f0"/>
 <path d="M784.5 191.7h3M786 190.2v3M796.5 191.7h3" stroke="#e0e0e0" stroke-width=".8"/>
 <circle cx="813" cy="191.7" r="2.2" fill="#e0e0e0"/><circle cx="813" cy="191.7" r=".9" fill="#5a5a5c"/>
 <path d="M818 190l.8-.8.8.8M818 193l.8.8.8-.8" stroke="#aaa" stroke-width=".5" fill="none"/>
 <path d="M783.5 291.7h4M785.5 289.7v4" stroke="#e0e0e0" stroke-width=".9"/><path d="M796 291.7h4" stroke="#8a8a8a" stroke-width=".8"/>
 <path d="M811.5 290a2 2 0 1 0 .8 .6" stroke="#cfcfcf" stroke-width=".8" fill="none"/>
 <g stroke="#d8d8d8" stroke-width=".7" fill="none"><path d="M778.7 313h4v4h-4zM784 313h4v4h-4zM778.7 318h4v4h-4zM784 318h4v4h-4z"/></g>
 <path d="M778.5 328.5l2 2 2-2" stroke="#9a9a9a" stroke-width=".7" fill="none"/>
 <path d="M778.5 423l2 2 2-2" stroke="#9a9a9a" stroke-width=".7" fill="none"/>
</svg>
<div class="t" style="left:777.5px;top:52.5px;font-size:4.2px;line-height:6px;color:#f4f4f4;font-weight:bold">PROJECT</div>
<div class="t" style="left:840px;top:52.5px;font-size:4.2px;line-height:6px;color:#6c6c6e">LAYERS</div>
<div class="t" style="left:802px;top:63.7px;font-size:5.2px;line-height:7px;color:#f0f0f0;font-weight:bold">First Floor</div>
<div class="t" style="left:802px;top:75.9px;font-size:5.2px;line-height:7px;color:#78787b">First Floor [1]</div>
<div class="t" style="left:802px;top:88.1px;font-size:5.2px;line-height:7px;color:#78787b">North Elevation</div>
<div class="t" style="left:802px;top:100.3px;font-size:5.2px;line-height:7px;color:#78787b">East Elevation</div>
<div class="t" style="left:802px;top:112.5px;font-size:5.2px;line-height:7px;color:#78787b">South Elevation</div>
<div class="t" style="left:802px;top:124.7px;font-size:5.2px;line-height:7px;color:#78787b">West Elevation</div>
<div class="t" style="left:802px;top:136.9px;font-size:5.2px;line-height:7px;color:#f0f0f0;font-weight:bold">Section A1</div>
<div class="t" style="left:795.4px;top:149.2px;font-size:5.2px;line-height:7px;color:#e8e8e8;font-weight:bold">Details</div>
<div class="t" style="left:802px;top:161.2px;font-size:5.2px;line-height:7px;color:#ffffff;font-weight:bold">Typical Section</div>
<div class="t" style="left:797px;top:173.5px;font-size:5.2px;line-height:7px;color:#e8e8e8;font-weight:bold">Layouts</div>
<div class="t" style="left:876px;top:64.2px;font-size:4.3px;line-height:6px;color:#a8a8aa">1:50</div>
<div class="t" style="left:875.5px;top:76.4px;font-size:4.3px;line-height:6px;color:#838385">1:100</div>
<div class="t" style="left:876px;top:88.6px;font-size:4.3px;line-height:6px;color:#838385">1:50</div>
<div class="t" style="left:876px;top:100.8px;font-size:4.3px;line-height:6px;color:#838385">1:50</div>
<div class="t" style="left:876px;top:113px;font-size:4.3px;line-height:6px;color:#838385">1:50</div>
<div class="t" style="left:876px;top:125.2px;font-size:4.3px;line-height:6px;color:#838385">1:50</div>
<div class="t" style="left:876px;top:137.4px;font-size:4.3px;line-height:6px;color:#a8a8aa">1:50</div>
<div class="t" style="left:878px;top:159.5px;font-size:3.4px;line-height:4px;color:#e8f0fa">ARI</div>
<div class="t" style="left:878px;top:165.5px;font-size:4px;line-height:5px;color:#ffffff">1:20</div>
<div class="t" style="left:777.5px;top:203px;font-size:4.2px;line-height:6px;color:#8a8a8c;font-weight:bold">PROJECT STYLES</div>
<div class="t" style="left:840px;top:203px;font-size:4.2px;line-height:6px;color:#f4f4f4;font-weight:bold">VIEWS</div>
<div class="t" style="left:777.5px;top:302.2px;font-size:4.2px;line-height:6px;color:#f4f4f4;font-weight:bold">OBJECT INFO</div>
<div class="t" style="left:793.8px;top:313.8px;font-size:5.6px;line-height:7px;color:#f0f0f0">Detail</div>
<div class="t" style="left:784px;top:326.5px;font-size:5.2px;line-height:7px;color:#e8e8e8;font-weight:bold">Sheet</div>
<div class="t" style="left:784px;top:421px;font-size:5.2px;line-height:7px;color:#e8e8e8;font-weight:bold">Detail Settings</div>
<svg class="a" style="left:0;top:0" width="900" height="513" viewBox="0 0 900 513">
 <rect x="821.6" y="338.9" width="74.4" height="9.4" fill="#232221" stroke="#47474a" stroke-width=".6"/>
 <rect x="821.6" y="366.2" width="46.3" height="8.6" fill="#232221" stroke="#47474a" stroke-width=".6"/>
 <path d="M872.5 370.5l1.5 1.5 1.5-1.5" stroke="#bbb" stroke-width=".7" fill="none"/>
 <rect x="821.9" y="379.4" width="73.3" height="8.6" rx="1.5" fill="#2e2e31" stroke="#47474a" stroke-width=".6"/>
 <rect x="821.9" y="391.9" width="73.3" height="9.4" rx="1.5" fill="#2e2e31" stroke="#47474a" stroke-width=".6"/>
 <rect x="821.9" y="404.5" width="73.3" height="9" rx="1.5" fill="#2e2e31" stroke="#47474a" stroke-width=".6"/>
 <g stroke="#aaa" stroke-width=".55" fill="none">
  <path d="M890.2 382.3l1.1-1.1 1.1 1.1M890.2 385.3l1.1 1.1 1.1-1.1"/>
  <path d="M890.2 395.2l1.1-1.1 1.1 1.1M890.2 398.2l1.1 1.1 1.1-1.1"/>
  <path d="M890.2 407.6l1.1-1.1 1.1 1.1M890.2 410.6l1.1 1.1 1.1-1.1"/>
 </g>
 <path d="M825 353.5a2.2 2.2 0 0 1 4.4 0v3h-4.4zM827.2 356.5v3.5" stroke="#f0f0f0" stroke-width="1" fill="#f0f0f0"/>
 <rect x="820.7" y="432.2" width="22.9" height="9.5" fill="#232221" stroke="#47474a" stroke-width=".6"/>
 <rect x="880.9" y="445.6" width="13.4" height="9.5" rx="1.2" fill="#6c6c6e"/>
 <path d="M884 448.5h4M884 448.5v4.5h6v-2.5M886.5 451l4-4" stroke="#eee" stroke-width=".8" fill="none"/>
 <rect x="822" y="459.9" width="18.8" height="7.6" rx="3.8" fill="#4a8fd8"/>
 <circle cx="836.8" cy="463.7" r="3.3" fill="#f8f8f8"/>
 <path d="M822.5 477.1H845.6" stroke="#e8e8e8" stroke-width="1.3"/>
 <path d="M845.6 477.1H868.5" stroke="#58585a" stroke-width="1"/>
 <circle cx="845.6" cy="477.1" r="2.5" fill="#8e8e90"/>
 <rect x="870.4" y="473.3" width="20.1" height="8.6" fill="#232221" stroke="#47474a" stroke-width=".6"/>
 <rect x="822" y="486.3" width="18.8" height="8" rx="4" fill="#68686a"/>
 <circle cx="826" cy="490.3" r="3.5" fill="#f8f8f8"/>
 <path d="M775 499.2H900" stroke="#3a3a3d" stroke-width=".8"/>
</svg>
<div class="t" style="right:83px;top:340.3px;font-size:5.4px;line-height:7px;color:#e6e6e6;text-align:right">Name:</div>
<div class="t" style="right:83px;top:353.4px;font-size:5.4px;line-height:7px;color:#e6e6e6;text-align:right">Options:</div>
<div class="t" style="right:83px;top:366.6px;font-size:5.4px;line-height:7px;color:#e6e6e6;text-align:right">Scale:</div>
<div class="t" style="right:83px;top:380.2px;font-size:5.4px;line-height:7px;color:#e6e6e6;text-align:right">Linear Unit:</div>
<div class="t" style="right:83px;top:393.2px;font-size:5.4px;line-height:7px;color:#e6e6e6;text-align:right">Angular Unit:</div>
<div class="t" style="right:83px;top:405.6px;font-size:5.4px;line-height:7px;color:#e6e6e6;text-align:right">Area Unit:</div>
<div class="t" style="right:83px;top:434.5px;font-size:5.4px;line-height:7px;color:#e6e6e6;text-align:right">Detail Number:</div>
<div class="t" style="right:83px;top:447.5px;font-size:5.4px;line-height:7px;color:#e6e6e6;text-align:right">Reference Area:</div>
<div class="t" style="right:83px;top:460.3px;font-size:5.4px;line-height:7px;color:#e6e6e6;text-align:right">Underlay:</div>
<div class="t" style="right:83px;top:473.7px;font-size:5.4px;line-height:7px;color:#e6e6e6;text-align:right">Opacity:</div>
<div class="t" style="right:83px;top:487.1px;font-size:5.4px;line-height:7px;color:#e6e6e6;text-align:right">Show Texts:</div>
<div class="t" style="left:823.5px;top:340.1px;font-size:5.5px;line-height:7px;color:#f0f0f0">Typical Section</div>
<div class="t" style="left:823.5px;top:367px;font-size:5.5px;line-height:7px;color:#f0f0f0">1:20</div>
<div class="t" style="left:824px;top:380.2px;font-size:5.9px;line-height:7px;color:#f0f0f0">Centimeters</div>
<div class="t" style="left:824px;top:393.1px;font-size:5.9px;line-height:7px;color:#f0f0f0">0.0000°</div>
<div class="t" style="left:824px;top:405.5px;font-size:5.9px;line-height:7px;color:#f0f0f0">Square Millimeters</div>
<div class="t" style="left:823px;top:433.4px;font-size:5.5px;line-height:7px;color:#f0f0f0">1</div>
<div class="t" style="left:822px;top:447.4px;font-size:5.6px;line-height:7px;color:#f0f0f0">Typical Section</div>
<div class="t" style="left:872px;top:474px;font-size:5.5px;line-height:7px;color:#f0f0f0">50%</div>
<div id="status" class="a"></div>
<div class="a" style="left:27px;top:489px;width:134px;height:1px;background:#fbfbfb"></div><div class="a" style="left:408px;top:489px;width:364px;height:1px;background:#fbfbfb"></div>
<div class="a" style="left:0;top:490px;width:772px;height:2px;background:#1e1e21"></div>
<div class="a" style="left:0;top:502px;width:900px;height:8px;background:#202023"></div>
<div class="a" style="left:347.3px;top:502.5px;width:49.9px;height:7.5px;background:#4a8fd8"></div>
<svg class="a" style="left:0;top:0" width="900" height="513" viewBox="0 0 900 513">
 <path d="M34.5 492.5h3.5l-.8 2.5v2.5l.9 1h-4.1l.9-1V495z" fill="#e8e8e8"/><path d="M36.2 499v2" stroke="#ccc" stroke-width=".7"/>
 <path d="M42.8 494.5l.9-.9.9.9M42.8 497.5l.9.9.9-.9" stroke="#aaa" stroke-width=".5" fill="none"/>
 <path d="M60 499l3-5M62 499l3-5" stroke="#8a8a8c" stroke-width=".8"/>
 <path d="M74 499h5M76.5 494v5l-2-2" stroke="#8a8a8c" stroke-width=".8" fill="none"/>
 <path d="M89 499l5-5.5" stroke="#9a9a9c" stroke-width="1.1"/>
 <path d="M156 494.5l.9-.9.9.9M156 497.5l.9.9.9-.9" stroke="#aaa" stroke-width=".5" fill="none"/>
 <rect x="664" y="492.8" width="5" height="5" fill="none" stroke="#c8c8c8" stroke-width=".8"/><path d="M664 495.3h5" stroke="#c8c8c8" stroke-width=".6"/>
 <circle cx="682" cy="495.2" r="2.3" fill="none" stroke="#d8d8d8" stroke-width=".9"/><path d="M683.6 496.8l1.8 1.8M681 495.2h2M682 494.2v2" stroke="#d8d8d8" stroke-width=".8"/>
 <circle cx="697" cy="495.2" r="2.3" fill="none" stroke="#d8d8d8" stroke-width=".9"/><path d="M698.6 496.8l1.8 1.8M696 495.2h2" stroke="#d8d8d8" stroke-width=".8"/>
 <path d="M731.5 494.5l.9-.9.9.9M731.5 497.5l.9.9.9-.9" stroke="#aaa" stroke-width=".5" fill="none"/>
 <circle cx="742" cy="495.2" r="2.3" fill="none" stroke="#d8d8d8" stroke-width=".9"/><path d="M743.6 496.8l1.8 1.8" stroke="#d8d8d8" stroke-width=".8"/>
 <rect x="756" y="494.5" width="4" height="4" fill="#aaa"/><path d="M760.5 492.5v4" stroke="#eee" stroke-width="1.3"/><circle cx="760.5" cy="492.8" r="1" fill="#eee"/>
</svg>
<span class="t" style="left:120.5px;top:493.8px;font-size:5.3px;line-height:7px;color:#d8d8d8;font-weight:bold">cm | 1:20</span>
<span class="t" style="left:280.5px;top:494.1px;font-size:5px;line-height:7px;color:#d0d0d0">X</span>
<span class="t" style="left:287.5px;top:494.1px;font-size:5.5px;line-height:7px;color:#d8d8d8">4161.96cm</span>
<span class="t" style="left:341.5px;top:494.1px;font-size:5px;line-height:7px;color:#d0d0d0">Y</span>
<span class="t" style="left:348.8px;top:494.1px;font-size:5.4px;line-height:7px;color:#d8d8d8">910.64cm</span>
<span class="t" style="left:401.5px;top:494.1px;font-size:5px;line-height:7px;color:#d0d0d0">L</span>
<span class="t" style="left:408px;top:494.1px;font-size:5.4px;line-height:7px;color:#d8d8d8">3.53cm</span>
<span class="t" style="left:460.5px;top:494.1px;font-size:5px;line-height:7px;color:#d0d0d0">A</span>
<span class="t" style="left:467px;top:494.1px;font-size:5.4px;line-height:7px;color:#d8d8d8">90.00°</span>
<span class="t" style="left:712.5px;top:493.8px;font-size:5.2px;line-height:7px;color:#d8d8d8;font-weight:bold">200%</span>
<span class="t" style="left:349px;top:503.5px;font-size:4.5px;line-height:6px;color:#bcd4f0;letter-spacing:.1px">RESIZE DRAWING</span>
<span class="t" style="left:400px;top:503.7px;font-size:5.4px;line-height:6px;color:#f0f0f0">Define parameters.</span>
<div id="bottomwhite" class="a"></div>
</body></html>
